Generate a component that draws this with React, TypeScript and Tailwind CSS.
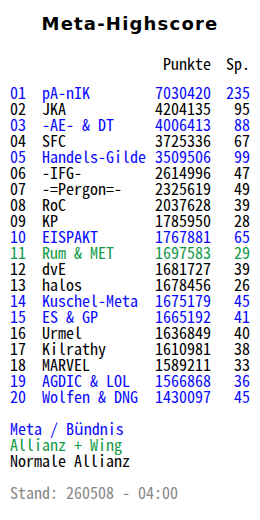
import React from 'react';

type Kind = 'meta' | 'wing' | 'normal';

const rows: { rank: string; name: string; points: string; sp: string; kind: Kind }[] = [
  { rank: '01', name: 'pA-nIK', points: '7030420', sp: '235', kind: 'meta' },
  { rank: '02', name: 'JKA', points: '4204135', sp: '95', kind: 'normal' },
  { rank: '03', name: '-AE- & DT', points: '4006413', sp: '88', kind: 'meta' },
  { rank: '04', name: 'SFC', points: '3725336', sp: '67', kind: 'normal' },
  { rank: '05', name: 'Handels-Gilde', points: '3509506', sp: '99', kind: 'meta' },
  { rank: '06', name: '-IFG-', points: '2614996', sp: '47', kind: 'normal' },
  { rank: '07', name: '-=Pergon=-', points: '2325619', sp: '49', kind: 'normal' },
  { rank: '08', name: 'RoC', points: '2037628', sp: '39', kind: 'normal' },
  { rank: '09', name: 'KP', points: '1785950', sp: '28', kind: 'normal' },
  { rank: '10', name: 'EISPAKT', points: '1767881', sp: '65', kind: 'meta' },
  { rank: '11', name: 'Rum & MET', points: '1697583', sp: '29', kind: 'wing' },
  { rank: '12', name: 'dvE', points: '1681727', sp: '39', kind: 'normal' },
  { rank: '13', name: 'halos', points: '1678456', sp: '26', kind: 'normal' },
  { rank: '14', name: 'Kuschel-Meta', points: '1675179', sp: '45', kind: 'meta' },
  { rank: '15', name: 'ES & GP', points: '1665192', sp: '41', kind: 'meta' },
  { rank: '16', name: 'Urmel', points: '1636849', sp: '40', kind: 'normal' },
  { rank: '17', name: 'Kilrathy', points: '1610981', sp: '38', kind: 'normal' },
  { rank: '18', name: 'MARVEL', points: '1589211', sp: '33', kind: 'normal' },
  { rank: '19', name: 'AGDIC & LOL', points: '1566868', sp: '36', kind: 'meta' },
  { rank: '20', name: 'Wolfen & DNG', points: '1430097', sp: '45', kind: 'meta' },
];

const kindColor: Record<Kind, string> = {
  meta: 'text-[#0a0aff]',
  wing: 'text-[#129a48]',
  normal: 'text-black',
};

export default function App() {
  return (
    <div className="w-[260px] h-[520px] bg-white px-[10px] font-['Noto_Sans_Mono_CJK_JP','Noto_Sans_CJK_JP','DejaVu_Sans_Mono',monospace] text-[16px] leading-[16px] text-black">
      <div className="h-[48px] flex items-center justify-center font-['DejaVu_Sans',sans-serif] font-bold text-[18px] tracking-[1.2px]">
        Meta-Highscore
      </div>

      <div className="mt-[7px] grid grid-cols-[32px_112px_57px_39px] h-[16px]">
        <span />
        <span />
        <span className="text-right">Punkte</span>
        <span className="text-right">Sp.</span>
      </div>

      <div className="mt-[13px] flex flex-col">
        {rows.map((r) => (
          <div key={r.rank} className={`grid grid-cols-[32px_112px_57px_39px] h-[16px] whitespace-pre ${kindColor[r.kind]}`}>
            <span>{r.rank}</span>
            <span>{r.name}</span>
            <span className="text-right">{r.points}</span>
            <span className="text-right">{r.sp}</span>
          </div>
        ))}
      </div>

      <div className="mt-[16px] flex flex-col">
        <span className="h-[16px] text-[#0a0aff]">Meta / Bündnis</span>
        <span className="h-[16px] text-[#129a48]">Allianz + Wing</span>
        <span className="h-[16px]">Normale Allianz</span>
      </div>

      <div className="mt-[16px] h-[16px] text-[#888888]">Stand: 260508 - 04:00</div>
    </div>
  );
}
